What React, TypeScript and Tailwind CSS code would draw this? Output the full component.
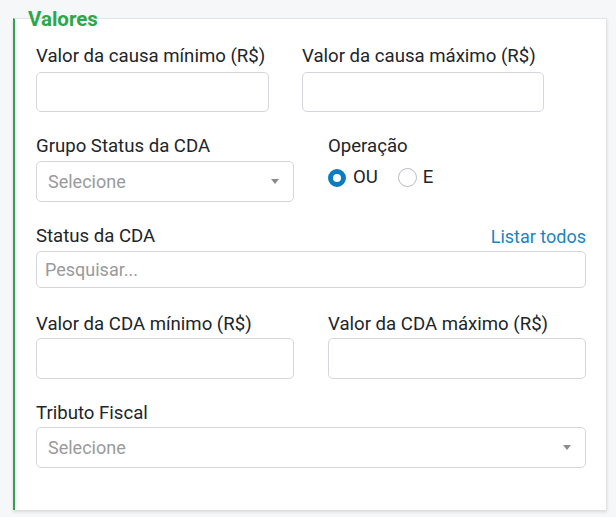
import React from 'react';

const Label: React.FC<{ children: React.ReactNode }> = ({ children }) => (
  <label className="block h-[21px] leading-[21px] text-[18.6px] text-[#212529]">{children}</label>
);

const TextInput: React.FC<{ className?: string; placeholder?: string }> = ({ className = '', placeholder }) => (
  <input
    type="text"
    placeholder={placeholder}
    className={`block rounded-[5px] border border-[#d3d6da] bg-white px-[8px] text-[18px] text-[#212529] outline-none placeholder:text-[#9a9a9a] ${className}`}
  />
);

const Select: React.FC<{ className?: string }> = ({ className = '' }) => (
  <div
    className={`flex items-center justify-between rounded-[5px] border border-[#d3d6da] bg-white pl-[11px] pr-[14px] ${className}`}
  >
    <span className="text-[18px] text-[#9a9a9a]">Selecione</span>
    <span className="h-0 w-0 border-x-[4px] border-t-[5px] border-x-transparent border-t-[#8c8c8c]" />
  </div>
);

export default function App() {
  return (
    <div className="min-h-[517px] bg-[#f6f7f9] pl-[13px] pt-[18px] font-['Roboto',sans-serif]">
      <div className="relative h-[492px] w-[594px] border-l-2 border-t border-r border-l-[#2ca74b] border-t-[#e2e3e5] border-r-[#e2e3e5] bg-white pl-[21px] pt-[27px] shadow-[0_2px_3px_rgba(0,0,0,0.12)]">
        {/* Legend */}
        <span className="absolute left-[13px] top-[-12px] text-[20.5px] font-bold leading-[24px] text-[#2ca74b]">
          Valores
        </span>

        {/* Valor da causa */}
        <div className="flex gap-[33px]">
          <div>
            <Label>Valor da causa mínimo (R$)</Label>
            <TextInput className="mt-[5px] h-[40px] w-[233px]" />
          </div>
          <div>
            <Label>Valor da causa máximo (R$)</Label>
            <TextInput className="mt-[5px] h-[40px] w-[242px]" />
          </div>
        </div>

        {/* Grupo status / Operação */}
        <div className="mt-[24px] flex gap-[34px]">
          <div>
            <Label>Grupo Status da CDA</Label>
            <Select className="mt-[4px] h-[41px] w-[258px]" />
          </div>
          <div>
            <Label>Operação</Label>
            <div className="mt-[10px] flex items-center text-[18.6px] leading-[21px] text-[#212529]">
              <span className="h-[18px] w-[18px] rounded-full border-[5px] border-[#0a7cc0] bg-white" />
              <span className="ml-[7px]">OU</span>
              <span className="ml-[20px] h-[19px] w-[19px] rounded-full border border-[#b8bcc0] bg-white" />
              <span className="ml-[6px]">E</span>
            </div>
          </div>
        </div>

        {/* Status da CDA */}
        <div className="mt-[24px] w-[550px]">
          <div className="flex items-end justify-between">
            <Label>Status da CDA</Label>
            <a className="h-[21px] cursor-pointer text-[18px] leading-[21px] text-[#1b84c4]">Listar todos</a>
          </div>
          <TextInput placeholder="Pesquisar..." className="mt-[4px] h-[37px] w-[550px]" />
        </div>

        {/* Valor da CDA */}
        <div className="mt-[26px] flex gap-[34px]">
          <div>
            <Label>Valor da CDA mínimo (R$)</Label>
            <TextInput className="mt-[3px] h-[41px] w-[258px]" />
          </div>
          <div>
            <Label>Valor da CDA máximo (R$)</Label>
            <TextInput className="mt-[3px] h-[41px] w-[258px]" />
          </div>
        </div>

        {/* Tributo Fiscal */}
        <div className="mt-[24px] w-[550px]">
          <Label>Tributo Fiscal</Label>
          <Select className="mt-[3px] h-[41px] w-[550px]" />
        </div>
      </div>
    </div>
  );
}
